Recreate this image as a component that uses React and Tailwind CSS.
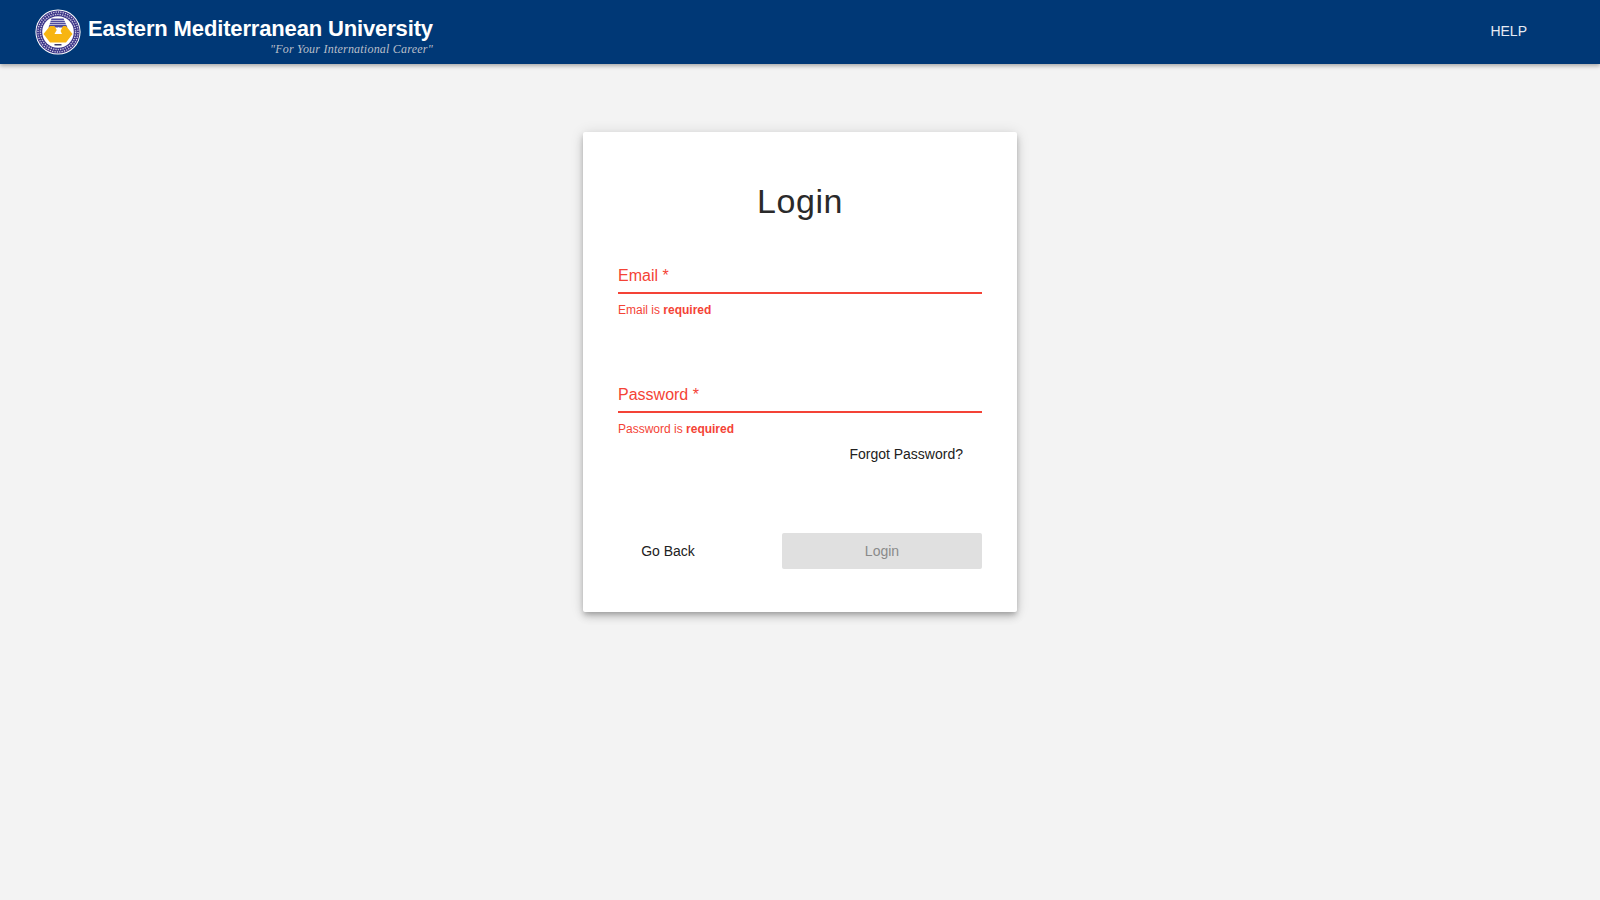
import React from 'react';

const Seal = () => (
  <svg width="46" height="46" viewBox="0 0 46 46" className="shrink-0">
    <circle cx="23" cy="23" r="22.6" fill="#ffffff" />
    <circle cx="23" cy="23" r="21.6" fill="#3b3488" />
    <circle cx="23" cy="23" r="20" fill="none" stroke="#ffffff" strokeWidth="1.3" strokeDasharray="1.2 1.2" opacity="0.8" />
    <circle cx="23" cy="23" r="17.6" fill="none" stroke="#ffffff" strokeWidth="1.4" strokeDasharray="1.4 1" opacity="0.7" />
    <circle cx="23" cy="23" r="15.8" fill="#ffffff" />
    <path d="M16.5 9.5h12l4 9h-19z" fill="#4f4c9e" />
    <path d="M15.5 11.5h15M14.8 13.5h16.4M14 15.5h18" stroke="#ffffff" strokeWidth="0.7" opacity="0.85" />
    <path d="M15 17 8.5 25l6.5 8.5h16l6.5-8.5-6.5-8h-3l-4 8-4.5-8z" fill="#f7b512" />
    <path d="M19.5 25 23.5 18l3.5 7z" fill="#ffffff" />
    <rect x="19.5" y="35" width="7" height="1.5" fill="#3a3a6a" />
  </svg>
);

const Field = ({ label, error }) => (
  <div>
    <div className="h-[38px] flex items-end pb-[5px] border-b-2 border-[#f44336]">
      <span className="font-['Liberation_Sans',Arial,sans-serif] text-base leading-[22px] text-[#f44336]">{label} *</span>
    </div>
    <p className="mt-[9px] font-['Liberation_Sans',Arial,sans-serif] text-[12px] leading-[14px] text-[#f44336]">
      {error} is <strong className="font-bold">required</strong>
    </p>
  </div>
);

export default function App() {
  return (
    <div className="min-h-[900px] bg-[#f3f3f3] font-['Roboto',sans-serif]">
      <header className="h-16 bg-[#003876] flex items-center justify-between pl-[35px] pr-[73px] shadow-[0_2px_4px_rgba(0,0,0,0.3)]">
        <div className="flex items-center gap-[7px]">
          <Seal />
          <div className="w-[346px] h-[46px] text-white">
            <div className="mt-[7px] font-['Liberation_Sans',Arial,sans-serif] font-bold text-[22px] leading-[26px] tracking-[-0.15px] whitespace-nowrap">
              Eastern Mediterranean University
            </div>
            <div className="text-right pr-[1px] font-['Liberation_Serif',serif] italic text-[12px] leading-[14px] tracking-[0.22px] text-[#b9bfc9] whitespace-nowrap">
              "For Your International Career"
            </div>
          </div>
        </div>
        <a className="-mt-[2px] font-['Liberation_Sans',Arial,sans-serif] text-sm leading-5 text-[#e6ebf3]">HELP</a>
      </header>

      <main className="flex justify-center pt-[68px]">
        <div className="w-[434px] h-[480px] bg-white rounded-[2px] px-[35px] pt-[46px] shadow-[0_3px_5px_-1px_rgba(0,0,0,0.2),0_5px_8px_0_rgba(0,0,0,0.14),0_1px_14px_0_rgba(0,0,0,0.12)]">
          <h1 className="text-center font-['Liberation_Sans',Arial,sans-serif] text-[34px] leading-[46px] tracking-[0.6px] font-normal text-[#2a2a2a]">Login</h1>
          <div className="mt-[32px]">
            <Field label="Email" error="Email" />
          </div>
          <div className="mt-[58px]">
            <Field label="Password" error="Password" />
          </div>
          <div className="flex justify-end pr-[19px] mt-[8px]">
            <a className="font-['Liberation_Sans',Arial,sans-serif] text-sm leading-5 text-[#212121]">Forgot Password?</a>
          </div>
          <div className="flex items-center justify-between mt-[69px]">
            <button className="w-[100px] h-9 font-['Liberation_Sans',Arial,sans-serif] text-sm text-[#212121]">Go Back</button>
            <button disabled className="w-[200px] h-9 rounded-[2px] bg-[#e0e0e0] font-['Liberation_Sans',Arial,sans-serif] text-sm text-[#8a8a8a]">Login</button>
          </div>
        </div>
      </main>
    </div>
  );
}
